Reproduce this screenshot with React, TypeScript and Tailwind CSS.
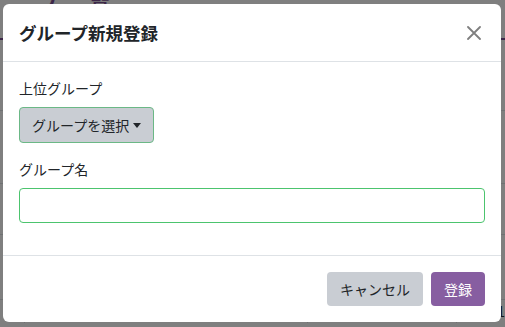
import React from "react";

export default function App() {
  const font = { fontFamily: '"Noto Sans CJK JP", "Noto Sans", sans-serif' };
  return (
    <div className="relative w-[505px] h-[327px] overflow-hidden bg-white" style={font}>
      {/* background page */}
      <div className="absolute inset-0 text-[14px] text-[#212529]">
        <div className="flex gap-8 pl-[38px] -mt-[12px] text-[20px] font-bold text-[#7b4f93]">
          <span>プ</span>
          <span>覧</span>
        </div>
        <div className="mt-[20px] border-b-2 border-[#7b4f93]" />
        <div className="mt-[70px] border-b border-[#dee2e6]" />
        <div className="mt-[72px] border-b border-[#dee2e6]" />
        <div className="mt-[50px] border-b border-[#dee2e6]" />
        <div className="mt-[64px] flex border-t border-[#dee2e6] text-[15px]">
          <span className="w-[28px] border-r border-[#dee2e6] pl-1">b</span>
          <span className="ml-[70px] w-[240px] border-r border-[#dee2e6]">(自社・管理部) 公開グループ</span>
          <span className="ml-[60px] w-[100px] border-r border-[#dee2e6]">0</span>
          <span className="ml-[40px]">1</span>
        </div>
      </div>
      <div className="absolute inset-0 bg-black/50" />

      {/* modal */}
      <div className="absolute left-[3px] top-[4px] w-[498px] rounded-[6px] bg-white">
        <div className="flex h-[58px] items-center justify-between border-b border-[#dee2e6] pl-4 pr-[20px]">
          <h5 className="text-[17.5px] font-bold leading-none text-[#212529]">グループ新規登録</h5>
          <svg width="14" height="14" viewBox="0 0 14 14" className="mt-[1px]">
            <path d="M1 1 L13 13 M13 1 L1 13" stroke="#7f7f7f" strokeWidth="1.8" strokeLinecap="round" />
          </svg>
        </div>
        <div className="px-4 pt-4 pb-4">
          <div className="mb-4">
            <label className="mb-2 block text-[14px] leading-[21px] text-[#212529]">上位グループ</label>
            <button className="flex h-[36px] items-center rounded-[4px] border border-[#6bb886] bg-[#c9cdd3] px-3 text-[14px] text-[#212529]">
              グループを選択
              <span className="ml-[4px] inline-block h-0 w-0 border-x-[4px] border-t-[5px] border-x-transparent border-t-[#212529]" />
            </button>
          </div>
          <div className="mb-4">
            <label className="mb-2 block text-[14px] leading-[21px] text-[#212529]">グループ名</label>
            <input className="block h-[35px] w-full rounded-[4px] border border-[#4cc46e] bg-white px-3 text-[14px] outline-none" />
          </div>
        </div>
        <div className="flex justify-end gap-2 border-t border-[#dee2e6] p-4">
          <button className="h-[34px] rounded-[4px] border border-transparent bg-[#c9cdd3] px-3 text-[14px] text-[#212529]">キャンセル</button>
          <button className="h-[34px] rounded-[4px] border border-transparent bg-[#875ea1] px-3 text-[14px] text-white">登録</button>
        </div>
      </div>
    </div>
  );
}
